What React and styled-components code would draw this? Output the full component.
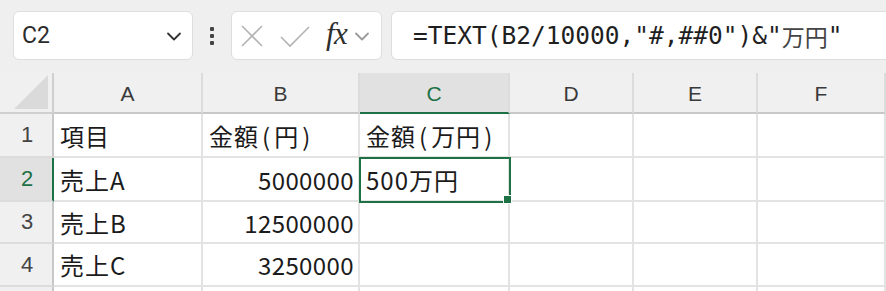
import React from "react";
import styled, { createGlobalStyle } from "styled-components";

const Global = createGlobalStyle`
  html, body { margin: 0; padding: 0; background: #ffffff; }
  body { font-family: "Noto Sans CJK JP", "Noto Sans", sans-serif; overflow: hidden; }
`;

const GREEN = "#1e7145";

const Page = styled.div`
  width: 886px;
  height: 291px;
  overflow: hidden;
  display: flex;
  flex-direction: column;
`;

const Toolbar = styled.div`
  height: 73px;
  flex: none;
  background: #efefef;
  display: flex;
  align-items: flex-start;
  padding: 11px 0 0 13px;
  box-sizing: border-box;
  overflow: hidden;
`;

const Box = styled.div`
  height: 49px;
  box-sizing: border-box;
  background: #ffffff;
  border: 1px solid #dedede;
  border-radius: 6px;
  display: flex;
  align-items: center;
  flex: none;
`;

const NameBox = styled(Box)`
  width: 180px;
  padding: 0 9px 0 8px;
  justify-content: space-between;
  font-family: Roboto, "Noto Sans", sans-serif;
  font-size: 23px;
  color: #2b2b2b;
`;

const Dots = styled.div`
  width: 38px;
  height: 49px;
  display: flex;
  align-items: center;
  justify-content: center;
  flex: none;
`;

const FxBox = styled(Box)`
  width: 151px;
  padding: 0 0 0 8px;
`;

const Fx = styled.span`
  font-family: "Liberation Serif", "DejaVu Serif", serif;
  font-style: italic;
  font-size: 31px;
  color: #2e2e2e;
  margin: -4px 6px 0 16px;
  letter-spacing: -0.5px;
`;

const FormulaBox = styled(Box)`
  width: 520px;
  margin-left: 9px;
  padding-left: 21px;
  border-right: none;
  border-radius: 6px 0 0 6px;
  font-family: "DejaVu Sans Mono", "Noto Sans CJK JP", monospace;
  font-size: 24.5px;
  color: #1f1f1f;
  white-space: nowrap;
`;

const Cjk = styled.span`
  font-family: "Noto Sans CJK JP", sans-serif;
  font-size: 23px;
  color: #444;
`;

const Sheet = styled.div`
  display: grid;
  grid-template-columns: 54px 149px 157px 150px 124px 124px 128px;
  grid-template-rows: 41px 44px 44px 42px 43px 20px;
  flex: none;
`;

const Corner = styled.div`
  background: #f0f0f0;
  border-right: 2px solid #cfcfcf;
  border-bottom: 2px solid #cfcfcf;
  box-sizing: border-box;
  display: flex;
  align-items: flex-end;
  justify-content: flex-end;
  padding: 0 4px 3px 0;
`;

const ColHead = styled.div`
  box-sizing: border-box;
  background: ${(p) => (p.$active ? "#e1e1e1" : "#f0f0f0")};
  border-right: 2px solid #dcdcdc;
  border-bottom: 2px solid ${(p) => (p.$active ? GREEN : "#c8c8c8")};
  color: ${(p) => (p.$active ? GREEN : "#3a3a3a")};
  font-family: "Liberation Sans", Arial, sans-serif;
  font-size: 21px;
  display: flex;
  align-items: center;
  justify-content: center;
  padding-top: 2px;
`;

const RowHead = styled.div`
  box-sizing: border-box;
  background: ${(p) => (p.$active ? "#e1e1e1" : "#f0f0f0")};
  border-right: 2px solid ${(p) => (p.$active ? GREEN : "#c8c8c8")};
  border-bottom: 2px solid #dcdcdc;
  color: ${(p) => (p.$active ? GREEN : "#444")};
  font-family: "Liberation Sans", Arial, sans-serif;
  font-size: 22px;
  display: flex;
  align-items: center;
  justify-content: center;
  padding-left: 2px;
`;

const Cell = styled.div`
  box-sizing: border-box;
  background: #ffffff;
  border-right: 2px solid #e3e3e3;
  border-bottom: 2px solid #e3e3e3;
  display: flex;
  align-items: center;
  justify-content: ${(p) => (p.$num ? "flex-end" : "flex-start")};
  padding: ${(p) => (p.$num ? "0 4px 0 0" : "0 0 0 6px")};
  font-family: "Noto Sans CJK JP", sans-serif;
  font-size: 24px;
  color: #1b1b1b;
  white-space: nowrap;
  position: relative;
  letter-spacing: ${(p) => (p.$num ? "0.4px" : "1px")};
  ${(p) =>
    p.$selected &&
    `
    outline: 2px solid ${GREEN};
    outline-offset: -1px;
    z-index: 1;
  `}
`;

const Paren = styled.span`
  padding: 0 3px;
`;

const Handle = styled.span`
  position: absolute;
  right: -4px;
  bottom: -4px;
  width: 7px;
  height: 7px;
  background: ${GREEN};
  border: 1px solid #fff;
`;

const Chevron = ({ color = "#333", size = 18 }) => (
  <svg width={size} height={size} viewBox="0 0 18 18">
    <path d="M3 6.5 L9 12.5 L15 6.5" fill="none" stroke={color} strokeWidth="1.8" strokeLinecap="round" strokeLinejoin="round" />
  </svg>
);

const renderText = (v) =>
  v.split(/([()])/).map((part, k) =>
    part === "(" || part === ")" ? <Paren key={k}>{part}</Paren> : part
  );

const cols = ["A", "B", "C", "D", "E", "F"];
const rows = [
  ["項目", "金額(円)", "金額(万円)", "", "", ""],
  ["売上A", "5000000", "500万円", "", "", ""],
  ["売上B", "12500000", "", "", "", ""],
  ["売上C", "3250000", "", "", "", ""],
  ["", "", "", "", "", ""],
];

export default function App() {
  return (
    <Page>
      <Global />
      <Toolbar>
        <NameBox>
          <span>C2</span>
          <Chevron />
        </NameBox>
        <Dots>
          <svg width="6" height="20" viewBox="0 0 6 20">
            <rect x="1" y="1" width="4" height="4" rx="1" fill="#444" />
            <rect x="1" y="8" width="4" height="4" rx="1" fill="#444" />
            <rect x="1" y="15" width="4" height="4" rx="1" fill="#444" />
          </svg>
        </Dots>
        <FxBox>
          <svg width="24" height="24" viewBox="0 0 24 24">
            <path d="M2 2 L22 22 M22 2 L2 22" stroke="#b4b4b4" strokeWidth="1.6" fill="none" />
          </svg>
          <svg width="30" height="24" viewBox="0 0 30 24" style={{ marginLeft: 16 }}>
            <path d="M1 13 L10 22 L29 3" stroke="#b4b4b4" strokeWidth="1.6" fill="none" />
          </svg>
          <Fx>fx</Fx>
          <Chevron color="#9a9a9a" size={18} />
        </FxBox>
        <FormulaBox>
          =TEXT(B2/10000,"#,##0")&amp;"<Cjk>万円</Cjk>"
        </FormulaBox>
      </Toolbar>
      <Sheet>
        <Corner>
          <svg width="34" height="34" viewBox="0 0 34 34">
            <path d="M34 0 L34 34 L0 34 Z" fill="#dadada" />
          </svg>
        </Corner>
        {cols.map((c) => (
          <ColHead key={c} $active={c === "C"}>{c}</ColHead>
        ))}
        {rows.map((r, i) => (
          <React.Fragment key={i}>
            <RowHead $active={i === 1}>{i < 4 ? i + 1 : ""}</RowHead>
            {r.map((v, j) => {
              const selected = i === 1 && j === 2;
              return (
                <Cell key={j} $num={j === 1 && i > 0} $selected={selected}>
                  {renderText(v)}
                  {selected && <Handle />}
                </Cell>
              );
            })}
          </React.Fragment>
        ))}
      </Sheet>
    </Page>
  );
}
